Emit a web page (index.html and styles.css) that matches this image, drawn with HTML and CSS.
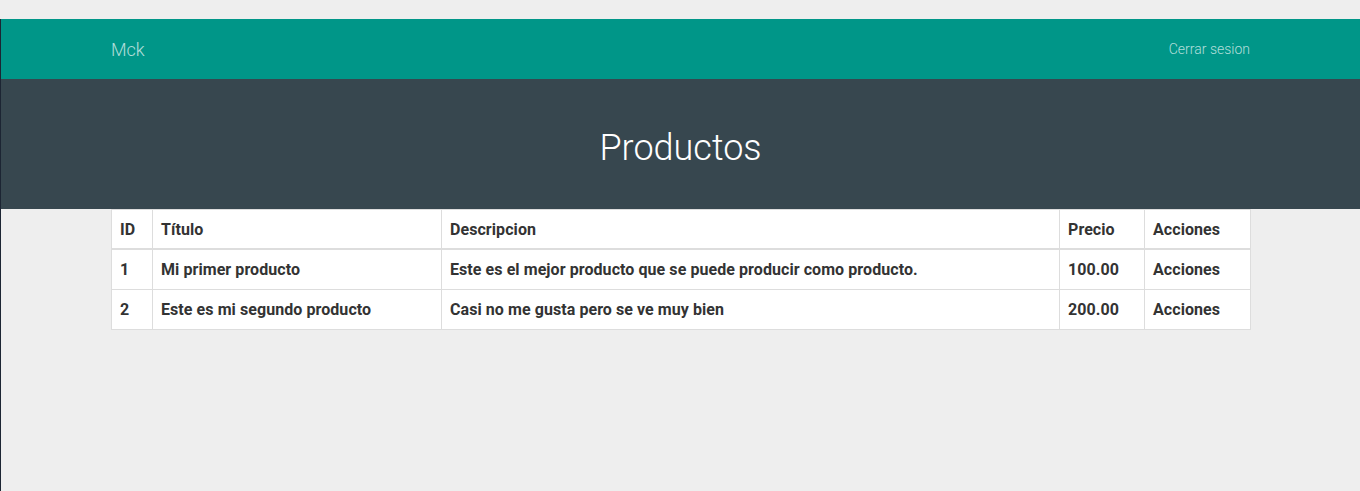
FILE: index.html
```html
<!DOCTYPE html>
<html lang="es">
<head>
<meta charset="utf-8">
<title>Productos</title>
<link rel="stylesheet" href="styles.css">
</head>
<body>
<div class="top-gap"></div>
<div class="page">
  <nav class="navbar">
    <div class="container nav-inner">
      <a class="brand" href="#">Mck</a>
      <a class="nav-link" href="#">Cerrar sesion</a>
    </div>
  </nav>
  <header class="hero">
    <h1>Productos</h1>
  </header>
  <main class="container">
    <table class="table">
      <colgroup>
        <col class="c-id"><col class="c-title"><col class="c-desc"><col class="c-price"><col class="c-act">
      </colgroup>
      <thead>
        <tr><th>ID</th><th>Título</th><th>Descripcion</th><th>Precio</th><th>Acciones</th></tr>
      </thead>
      <tbody>
        <tr><td>1</td><td>Mi primer producto</td><td>Este es el mejor producto que se puede producir como producto.</td><td>100.00</td><td>Acciones</td></tr>
        <tr><td>2</td><td>Este es mi segundo producto</td><td>Casi no me gusta pero se ve muy bien</td><td>200.00</td><td>Acciones</td></tr>
      </tbody>
    </table>
  </main>
</div>
</body>
</html>
```
FILE: styles.css
```css
html, body {
  margin: 0;
  padding: 0;
  background: #eeeeee;
  font-family: Roboto, "Liberation Sans", sans-serif;
}
.top-gap {
  height: 19px;
}
.page {
  border-left: 1px solid #1c2533;
  min-height: 472px;
}
.container {
  width: 1140px;
  margin: 0 0 0 110px;
}
.navbar {
  background: #009688;
  height: 60px;
}
.nav-inner {
  display: flex;
  justify-content: space-between;
  align-items: center;
  height: 60px;
}
.brand {
  color: rgba(255, 255, 255, 0.7);
  text-decoration: none;
  font-size: 18px;
  font-weight: 300;
}
.nav-link {
  color: rgba(255, 255, 255, 0.7);
  text-decoration: none;
  font-size: 14px;
  font-weight: 300;
  margin-right: 1px;
}
.hero {
  background: #37474f;
  height: 130px;
  box-sizing: border-box;
  padding-top: 10px;
  display: flex;
  align-items: center;
  justify-content: center;
}
.hero h1 {
  margin: 0;
  color: #ffffff;
  font-size: 36px;
  font-weight: 300;
  line-height: 1.1;
}
.table {
  width: 1139px;
  table-layout: fixed;
  border-collapse: collapse;
  background: #ffffff;
  color: #333333;
  font-size: 16px;
  font-weight: 700;
  letter-spacing: 0.07px;
}
.c-id { width: 41px; }
.c-title { width: 289px; }
.c-desc { width: 618px; }
.c-price { width: 85px; }
.c-act { width: 106px; }
.table th, .table td {
  border: 1px solid #dddddd;
  text-align: left;
  vertical-align: middle;
  white-space: nowrap;
}
.table th {
  padding: 9px 8px 7px;
  line-height: 22px;
  border-bottom: 2px solid #dddddd;
}
.table td {
  padding: 8px;
  line-height: 23px;
}
```
